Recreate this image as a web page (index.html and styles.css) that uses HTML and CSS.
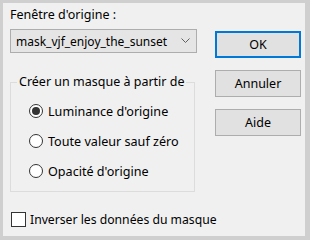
FILE: index.html
```html
<!DOCTYPE html>
<html lang="fr">
<head>
    <meta charset="UTF-8">
    <title>Masque</title>
    <link rel="stylesheet" href="styles.css">
</head>
<body>
    <div class="frame">
        <div class="dialog">
            <div class="main">
                <div class="left">
                    <div class="label">Fenêtre d'origine :</div>
                    <div class="combo">
                        <span>mask_vjf_enjoy_the_sunset</span>
                        <svg width="9" height="6" viewBox="0 0 9 6"><polyline points="0.5,0.5 4.5,4.5 8.5,0.5" fill="none" stroke="#606060" stroke-width="1"/></svg>
                    </div>
                    <fieldset class="group">
                        <legend>Créer un masque à partir de</legend>
                        <label class="option"><input type="radio" name="src" checked>Luminance d'origine</label>
                        <label class="option"><input type="radio" name="src">Toute valeur sauf zéro</label>
                        <label class="option"><input type="radio" name="src">Opacité d'origine</label>
                    </fieldset>
                </div>
                <div class="buttons">
                    <button class="btn default">OK</button>
                    <button class="btn">Annuler</button>
                    <button class="btn">Aide</button>
                </div>
            </div>
            <label class="check"><input type="checkbox">Inverser les données du masque</label>
        </div>
    </div>
</body>
</html>
```

FILE: styles.css
```css
body {
    margin: 0;
    font-family: "Noto Sans", "Open Sans", sans-serif;
    font-size: 12px;
    color: #000;
}
.frame {
    width: 310px;
    height: 240px;
    box-sizing: border-box;
    border-style: solid;
    border-color: #cfcfcf;
    border-width: 3px 5px 4px 3px;
    background: #f0f0f0;
}
.dialog {
    padding: 4px 0 0 7px;
}
.main {
    display: flex;
    gap: 18px;
}
.left {
    width: 187px;
}
.label {
    font-size: 12.5px;
    line-height: 16px;
}
.combo {
    margin-top: 6px;
    height: 24px;
    box-sizing: border-box;
    border: 1px solid #adadad;
    background: #e5e5e5;
    display: flex;
    align-items: center;
    justify-content: space-between;
    padding: 0 6px 0 5px;
}
.combo svg {
    display: block;
}
.group {
    margin: 21px 0 0 0;
    width: 185px;
    box-sizing: border-box;
    border: 1px solid #dcdcdc;
    padding: 6px 6px 5px 6px;
}
.group legend {
    padding: 0 2px;
    font-size: 12.5px;
    line-height: 16px;
}
.option {
    display: flex;
    align-items: center;
    height: 30px;
    font-size: 12.6px;
}
.option input {
    appearance: none;
    margin: 0 5px 0 12px;
    width: 14px;
    height: 14px;
    box-sizing: border-box;
    border: 1px solid #333;
    border-radius: 50%;
    background: #fff;
    position: relative;
}
.option input:checked::after {
    content: "";
    position: absolute;
    left: 2px;
    top: 2px;
    width: 8px;
    height: 8px;
    border-radius: 50%;
    background: #333;
}
.buttons {
    display: flex;
    flex-direction: column;
    gap: 12px;
    margin-top: 24px;
}
.btn {
    width: 86px;
    height: 27px;
    box-sizing: border-box;
    border: 1px solid #adadad;
    background: #e1e1e1;
    font-family: inherit;
    font-size: 12.5px;
    color: #000;
    padding: 0;
}
.btn.default {
    border: 2px solid #0078d7;
}
.check {
    display: flex;
    align-items: center;
    height: 16px;
    margin-top: 19px;
    font-size: 12.2px;
}
.check input {
    appearance: none;
    margin: 0 4px 0 1px;
    width: 15px;
    height: 15px;
    box-sizing: border-box;
    border: 1px solid #333;
    background: #fff;
}
```
